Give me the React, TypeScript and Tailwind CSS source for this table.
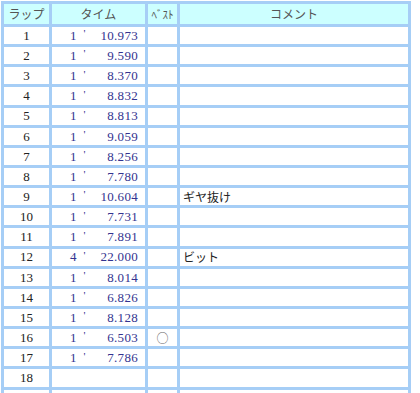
const LAPS: { lap?: number; min?: string; sec?: string; best?: boolean; note?: string }[] = [
  { lap: 1, min: "1", sec: "10.973" },
  { lap: 2, min: "1", sec: "9.590" },
  { lap: 3, min: "1", sec: "8.370" },
  { lap: 4, min: "1", sec: "8.832" },
  { lap: 5, min: "1", sec: "8.813" },
  { lap: 6, min: "1", sec: "9.059" },
  { lap: 7, min: "1", sec: "8.256" },
  { lap: 8, min: "1", sec: "7.780" },
  { lap: 9, min: "1", sec: "10.604", note: "ギヤ抜け" },
  { lap: 10, min: "1", sec: "7.731" },
  { lap: 11, min: "1", sec: "7.891" },
  { lap: 12, min: "4", sec: "22.000", note: "ビット" },
  { lap: 13, min: "1", sec: "8.014" },
  { lap: 14, min: "1", sec: "6.826" },
  { lap: 15, min: "1", sec: "8.128" },
  { lap: 16, min: "1", sec: "6.503", best: true },
  { lap: 17, min: "1", sec: "7.786" },
  { lap: 18 },
  {},
];

const serif = "font-['Liberation_Serif','Noto_Sans_CJK_JP',serif]";
const jp = "font-['Noto_Sans_CJK_JP',sans-serif]";

export default function App() {
  return (
    <div className="h-[393px] w-[420px] overflow-hidden bg-white">
      <div className="ml-[1px] mt-[1px] grid w-[410px] grid-cols-[45px_93px_29px_228px] gap-[3px] bg-[#a6cef6] p-[3px] text-[12px]">
        {/* header */}
        <div className={`flex h-[20px] items-center justify-center bg-[#ccffff] text-[#555] ${jp}`}>ラップ</div>
        <div className={`flex h-[20px] items-center justify-center bg-[#ccffff] text-[#555] ${jp}`}>タイム</div>
        <div className={`flex h-[20px] items-center justify-center bg-[#ccffff] text-[11px] text-[#555] ${jp}`}>ﾍﾞｽﾄ</div>
        <div className={`flex h-[20px] items-center justify-center bg-[#ccffff] text-[#555] ${jp}`}>コメント</div>

        {LAPS.map((r, i) => (
          <div key={i} className="contents">
            <div className={`flex h-[17.15px] items-center justify-center bg-white text-[13px] text-[#222] ${serif}`}>{r.lap ?? ""}</div>
            <div className={`flex h-[17.15px] items-center bg-white text-[13px] text-[#33338f] ${serif}`}>
              {r.min && (
                <>
                  <span className="pl-[18px]">{r.min}</span>
                  <span className="ml-[7px] -translate-y-[2px] text-[11px]">'</span>
                  <span className="ml-auto pr-[7px] tracking-[0.3px]">{r.sec}</span>
                </>
              )}
            </div>
            <div className={`flex h-[17.15px] items-center justify-center bg-white text-[12px] text-[#666] ${jp}`}>
              {r.best ? "○" : ""}
            </div>
            <div className={`flex h-[17.15px] items-center bg-white pl-[3px] text-[#222] ${jp}`}>{r.note ?? ""}</div>
          </div>
        ))}
      </div>
    </div>
  );
}
